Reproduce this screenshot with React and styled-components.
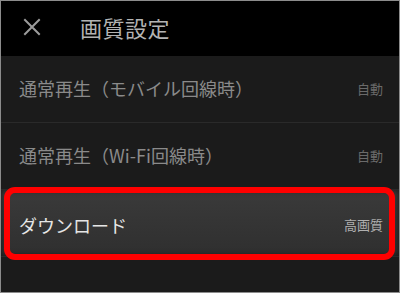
import React from "react";
import styled, { createGlobalStyle } from "styled-components";

const GlobalStyle = createGlobalStyle`
  html, body {
    margin: 0;
    padding: 0;
    background: #1b1b1b;
  }
  body {
    font-family: "Noto Sans CJK JP", "Noto Sans", sans-serif;
  }
`;

const Frame = styled.div`
  width: 400px;
  height: 293px;
  box-sizing: border-box;
  border: 1px solid #8c8c8c;
  background: #1b1b1b;
  display: flex;
  flex-direction: column;
  overflow: hidden;
`;

const Header = styled.div`
  height: 55px;
  flex-shrink: 0;
  background: #000;
  display: flex;
  align-items: center;
  padding-left: 21px;
  gap: 38px;
`;

const CloseButton = styled.div`
  width: 20px;
  height: 20px;
  display: flex;
  align-items: center;
  justify-content: center;
  margin-top: -4px;
`;

const Title = styled.h1`
  margin: 0;
  margin-top: -4px;
  font-size: 22px;
  font-weight: 400;
  color: #b3b3b3;
  letter-spacing: 0.5px;
`;

const Row = styled.div`
  position: relative;
  height: 66px;
  flex-shrink: 0;
  display: flex;
  align-items: center;
  justify-content: space-between;
  padding: 0 16px 0 18px;
  border-bottom: 1px solid #2a2a2a;
  background: ${(p) =>
    p.$active ? "linear-gradient(#3a3a3a, #2f2f2f)" : "transparent"};
  box-shadow: ${(p) =>
    p.$active ? "inset 0 0 6px rgba(0,0,0,0.6)" : "none"};
`;

const Label = styled.span`
  font-size: 18px;
  color: ${(p) => (p.$active ? "#e6e6e6" : "#8a8a8a")};
  margin-top: ${(p) => (p.$active ? "3px" : "-2px")};
`;

const Value = styled.span`
  font-size: 13px;
  color: ${(p) => (p.$active ? "#b0b0b0" : "#6a6a6a")};
  margin-top: ${(p) => (p.$active ? "3px" : "-2px")};
`;

const Highlight = styled.div`
  position: absolute;
  left: 3px;
  right: 4px;
  top: -3px;
  bottom: -4px;
  border: 6px solid #ff0000;
  border-radius: 11px;
  pointer-events: none;
`;

const CloseIcon = () => (
  <svg width="18" height="18" viewBox="0 0 18 18">
    <path
      d="M2 2 L16 16 M16 2 L2 16"
      stroke="#9c9c9c"
      strokeWidth="2"
      strokeLinecap="square"
    />
  </svg>
);

const rows = [
  { label: "通常再生（モバイル回線時）", value: "自動" },
  { label: "通常再生（Wi-Fi回線時）", value: "自動" },
  { label: "ダウンロード", value: "高画質", active: true },
];

const App = () => {
  return (
    <Frame>
      <GlobalStyle />
      <Header>
        <CloseButton>
          <CloseIcon />
        </CloseButton>
        <Title>画質設定</Title>
      </Header>
      {rows.map((row) => (
        <Row key={row.label} $active={row.active}>
          <Label $active={row.active}>{row.label}</Label>
          <Value $active={row.active}>{row.value}</Value>
          {row.active && <Highlight />}
        </Row>
      ))}
    </Frame>
  );
};

export default App;
